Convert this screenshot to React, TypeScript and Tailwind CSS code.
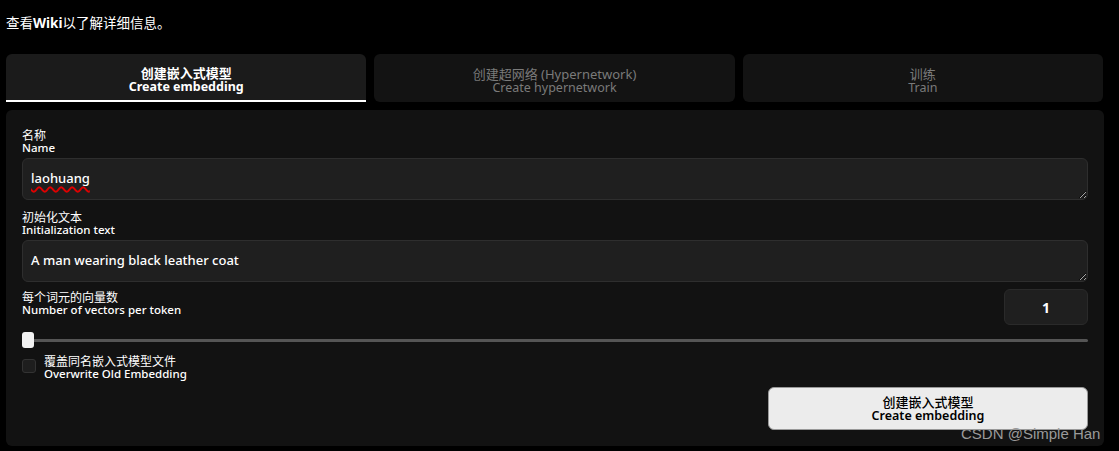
import React from "react";

const font = { fontFamily: '"Noto Sans", "Noto Sans CJK SC", sans-serif' };

function Tab({ zh, en, active }: { zh: string; en: string; active?: boolean }) {
  return (
    <div
      className={
        "flex h-[48px] flex-col items-center justify-center rounded-t-md pt-[6px] text-[12.5px] leading-[14px] " +
        (active
          ? "border-b-2 border-white bg-[#1b1b1b] font-bold text-white"
          : "rounded-b-md bg-[#131313] text-[#7a7a7a]")
      }
    >
      <span className="text-[13px]">{zh}</span>
      <span>{en}</span>
    </div>
  );
}

function Label({ zh, en }: { zh: string; en: string }) {
  return (
    <div className="text-[11.5px] leading-[12px] text-white">
      <div className="text-[12px]">{zh}</div>
      <div className="font-medium">{en}</div>
    </div>
  );
}

function Field({ value, spell }: { value: string; spell?: boolean }) {
  return (
    <textarea
      defaultValue={value}
      spellCheck={spell}
      rows={1}
      className={
        "mt-[4px] block h-[42px] w-full resize-y rounded-md border border-[#2e2e2e] bg-[#1f1f1f] px-[8px] py-[10px] text-[13px] font-medium leading-[18px] text-white outline-none " +
        (spell ? "underline decoration-[#e00000] decoration-wavy decoration-[1.5px] underline-offset-[3px]" : "")
      }
      style={font}
    />
  );
}

export default function App() {
  return (
    <div className="min-h-screen bg-black pl-[6px] pt-[15px]" style={font}>
      <p className="text-[13.5px] leading-[16px] text-white">
        查看<b>Wiki</b>以了解详细信息。
      </p>
      <div className="mt-[23px] grid w-[1097px] grid-cols-3 gap-[8px]">
        <Tab zh="创建嵌入式模型" en="Create embedding" active />
        <Tab zh="创建超网络 (Hypernetwork)" en="Create hypernetwork" />
        <Tab zh="训练" en="Train" />
      </div>
      <div className="mt-[8px] w-[1098px] rounded-md bg-[#121212] px-[16px] pb-[16px] pt-[20px]">
        <div className="w-[1066px]">
          <Label zh="名称" en="Name" />
          <Field value="laohuang" spell />
          <div className="mt-[12px]">
            <Label zh="初始化文本" en="Initialization text" />
          </div>
          <Field value="A man wearing black leather coat" />
          <div className="mt-[7px] flex items-start justify-between">
            <div className="pt-[3px]">
              <Label zh="每个词元的向量数" en="Number of vectors per token" />
            </div>
            <div className="flex h-[36px] w-[84px] items-center justify-center rounded-md border border-[#2a2a2a] bg-[#1f1f1f] text-[14px] font-bold text-white">
              1
            </div>
          </div>
          <div className="relative mt-[7px] flex h-[16px] items-center">
            <div className="h-[3px] w-full rounded bg-[#555]" />
            <div className="absolute left-0 top-0 h-[16px] w-[12px] rounded-[3px] bg-[#f2f2f2]" />
          </div>
          <div className="mt-[10px] flex items-start gap-[8px]">
            <div className="mt-[1px] h-[14px] w-[14px] rounded-[3px] border border-[#333] bg-[#1e1e1e]" />
            <div className="-mt-[2px]">
              <Label zh="覆盖同名嵌入式模型文件" en="Overwrite Old Embedding" />
            </div>
          </div>
          <div className="mt-[7px] flex justify-end">
            <button className="flex h-[43px] w-[320px] flex-col items-center justify-center rounded-md border border-[#999] bg-[#ececec] text-[12.5px] font-semibold leading-[14px] text-black">
              <span className="text-[13px] font-medium">创建嵌入式模型</span>
              <span>Create embedding</span>
            </button>
          </div>
        </div>
      </div>
      <div
        className="absolute left-[961px] top-[423px] text-[15px] text-[#9a9a9a]"
        style={{ fontFamily: '"Liberation Sans", sans-serif' }}
      >
        CSDN @Simple Han
      </div>
    </div>
  );
}
